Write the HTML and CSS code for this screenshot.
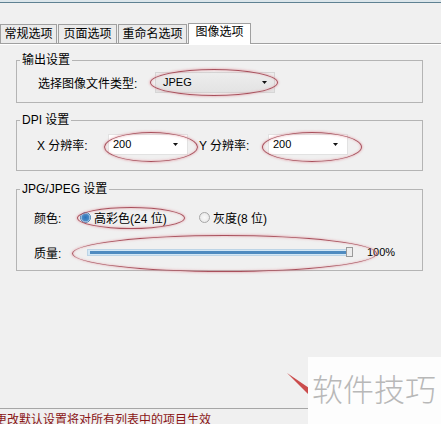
FILE: index.html
```html
<!DOCTYPE html>
<html lang="zh-CN">

<head>
    <meta charset="UTF-8" />
    <title>图像选项</title>
    <link rel="stylesheet" href="styles.css">
</head>

<body>
    <div class="window">
        <div class="topline"></div>

        <ul class="tabs">
            <li class="tab tab-general">常规选项</li>
            <li class="tab tab-page">页面选项</li>
            <li class="tab tab-rename">重命名选项</li>
            <li class="tab tab-image active">图像选项</li>
        </ul>

        <div class="page">
            <fieldset class="group group-output">
                <legend>输出设置</legend>
                <div class="row">
                    <label class="lbl lbl-type">选择图像文件类型:</label>
                    <div class="combo combo-type">
                        <span>JPEG</span>
                        <svg class="arrow" width="5" height="3" viewBox="0 0 5 3"><path d="M0 0h5L2.5 3z" /></svg>
                    </div>
                </div>
            </fieldset>

            <fieldset class="group group-dpi">
                <legend>DPI 设置</legend>
                <div class="row">
                    <label class="lbl lbl-x">X 分辨率:</label>
                    <div class="combo combo-dpi">
                        <span>200</span>
                        <svg class="arrow" width="5" height="3" viewBox="0 0 5 3"><path d="M0 0h5L2.5 3z" /></svg>
                    </div>
                    <label class="lbl lbl-y">Y 分辨率:</label>
                    <div class="combo combo-dpi">
                        <span>200</span>
                        <svg class="arrow" width="5" height="3" viewBox="0 0 5 3"><path d="M0 0h5L2.5 3z" /></svg>
                    </div>
                </div>
            </fieldset>

            <fieldset class="group group-jpeg">
                <legend>JPG/JPEG 设置</legend>
                <div class="row">
                    <label class="lbl lbl-color">颜色:</label>
                    <div class="radio-opt first">
                        <span class="radio checked"></span>
                        <span>高彩色(24 位)</span>
                    </div>
                    <div class="radio-opt">
                        <span class="radio"></span>
                        <span>灰度(8 位)</span>
                    </div>
                </div>
                <div class="row row-quality">
                    <label class="lbl lbl-quality">质量:</label>
                    <div class="slider">
                        <div class="track"><div class="fill"></div></div>
                        <div class="thumb"></div>
                    </div>
                    <span class="percent">100%</span>
                </div>
            </fieldset>
        </div>

        <div class="status">更改默认设置将对所有列表中的项目生效</div>
    </div>

    <!-- marcas vermelhas da captura -->
    <div class="ring ring-type"></div>
    <div class="ring ring-x"></div>
    <div class="ring ring-y"></div>
    <div class="ring ring-color"></div>
    <div class="ring ring-quality"></div>

    <svg class="pointer" width="30" height="26" viewBox="0 0 30 26">
        <path d="M2 2 L27 19 L23 23 Z" fill="#c63a3a" opacity="0.9" />
    </svg>

    <div class="watermark">软件技巧</div>
</body>

</html>
```

FILE: styles.css
```css
body {
    margin: 0;
    width: 441px;
    height: 424px;
    overflow: hidden;
    position: relative;
    background: #f0f0f0;
    font-family: 'Liberation Sans', 'Noto Sans CJK SC', sans-serif;
    font-size: 12px;
    color: #000;
}

.window {
    display: flex;
    flex-direction: column;
    height: 424px;
}

.topline {
    flex: none;
    height: 2px;
    background: #dce6eb;
    border-bottom: 1px solid #5f8192;
}

/* abas */
.tabs {
    flex: none;
    list-style: none;
    margin: 20px 0 0;
    padding: 0;
    height: 20px;
    display: flex;
    align-items: flex-end;
    border-bottom: 1px solid #a0a0a0;
}

.tab {
    box-sizing: border-box;
    height: 19px;
    line-height: 18px;
    border: 1px solid #a0a0a0;
    border-bottom: none;
    margin-right: 1px;
    background: #ebebeb;
    text-align: center;
    white-space: nowrap;
}

.tab-general { width: 57px; }
.tab-page { width: 59px; }
.tab-rename { width: 69px; }
.tab-image { width: 63px; }

.tab.active {
    height: 21px;
    line-height: 16px;
    margin-bottom: -1px;
    background: #fff;
}

/* pagina */
.page {
    flex: 1;
    border-top: 1px solid #fff;
    padding: 7px 18px 0 16px;
}

.group {
    margin: 0;
    min-width: 0;
    border: 1px solid #b4b4b4;
    padding: 0;
}

.group legend {
    margin-left: 3px;
    padding: 0 2px;
    height: 16px;
    line-height: 16px;
}

.group-output { padding: 3px 0 9px; }
.group-dpi { margin-top: 9px; padding: 5px 0 15px; }
.group-jpeg { margin-top: 10px; padding: 9px 0 7px; }

.row {
    display: flex;
    align-items: center;
    height: 22px;
    white-space: nowrap;
}

.group-output .row { padding-left: 21px; }
.group-dpi .row { padding-left: 20px; }
.group-jpeg .row { padding-left: 17px; }

.row-quality {
    margin-top: 13px;
}

.lbl-type { width: 117px; }
.lbl-x { width: 71px; }
.lbl-y { width: 69px; margin-left: 11px; }
.lbl-color { width: 46px; }
.lbl-quality { width: 53px; }

/* combos */
.combo {
    box-sizing: border-box;
    height: 21px;
    display: flex;
    align-items: center;
    justify-content: space-between;
    font-size: 11px;
    border: 1px solid #e2e2e2;
    background: #fff;
}

.combo-type {
    width: 120px;
    padding: 0 7px 0 7px;
    background: linear-gradient(#ededed, #e3e3e3);
    border-color: #d6d6d6;
}

.combo-dpi {
    width: 80px;
    padding: 0 9px 0 4px;
}

.arrow {
    fill: #111;
}

/* radios */
.radio-opt {
    display: flex;
    align-items: center;
    gap: 3px;
}

.radio-opt.first {
    width: 119px;
}

.radio {
    box-sizing: border-box;
    width: 11px;
    height: 11px;
    border-radius: 50%;
    border: 1px solid #a7a7a7;
    background: radial-gradient(circle, #fafafa 0, #e4e4e4 100%);
}

.radio.checked {
    border-color: #3f7db5;
    background: radial-gradient(circle, #2c72b8 0, #4a8cc8 55%, #cfe3f3 70%, #e8f1f9 100%);
}

/* barra de qualidade */
.slider {
    width: 266px;
    height: 10px;
    position: relative;
}

.track {
    box-sizing: border-box;
    width: 263px;
    height: 7px;
    margin-top: 2px;
    padding: 1px 2px;
    background: #d3e7f5;
    border: 1px solid #bcd4e6;
}

.fill {
    height: 3px;
    background: #4f8bc0;
}

.thumb {
    position: absolute;
    right: 0;
    top: 0;
    box-sizing: border-box;
    width: 7px;
    height: 10px;
    border: 1px solid #9a9a9a;
    background: #ececec;
}

.percent {
    margin-left: 14px;
    font-size: 11px;
}

/* rodape */
.status {
    flex: none;
    height: 12px;
    padding-top: 3px;
    line-height: 16px;
    overflow: hidden;
    border-top: 1px solid #a6a6a6;
    color: #8a1515;
    text-indent: -5px;
    white-space: nowrap;
}

/* anotacoes */
.ring {
    position: absolute;
    box-sizing: border-box;
    border: 1px solid #a9505c;
    border-radius: 50%;
    box-shadow: 0 0 2px 1px rgba(225, 140, 150, 0.45), inset 0 0 2px 1px rgba(225, 140, 150, 0.35);
}

.ring-type { left: 150px; top: 69px; width: 128px; height: 27px; }
.ring-x { left: 104px; top: 132px; width: 94px; height: 30px; }
.ring-y { left: 262px; top: 132px; width: 100px; height: 30px; }
.ring-color { left: 77px; top: 207px; width: 108px; height: 22px; }
.ring-quality { left: 72px; top: 235px; width: 305px; height: 37px; }

.pointer {
    position: absolute;
    left: 285px;
    top: 371px;
}

.watermark {
    position: absolute;
    left: 308px;
    top: 357px;
    width: 133px;
    height: 67px;
    box-sizing: border-box;
    padding: 15px 0 0 4px;
    background: #fdfdfd;
    color: #b8b8b8;
    font-family: 'Noto Sans CJK SC', sans-serif;
    font-size: 31px;
    font-weight: 300;
    line-height: 31px;
    white-space: nowrap;
}
```
